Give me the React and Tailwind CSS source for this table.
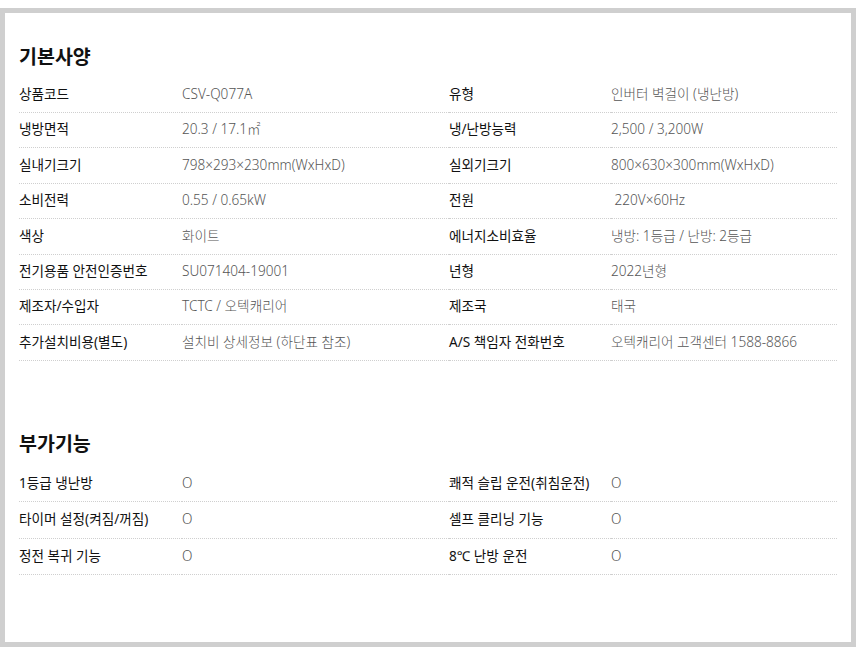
import React from 'react';

const specRows = [
  ['상품코드', 'CSV-Q077A', '유형', '인버터 벽걸이 (냉난방)'],
  ['냉방면적', '20.3 / 17.1㎡', '냉/난방능력', '2,500 / 3,200W'],
  ['실내기크기', '798×293×230mm(WxHxD)', '실외기크기', '800×630×300mm(WxHxD)'],
  ['소비전력', '0.55 / 0.65kW', '전원', '\u00a0220V×60Hz'],
  ['색상', '화이트', '에너지소비효율', '냉방: 1등급 / 난방: 2등급'],
  ['전기용품 안전인증번호', 'SU071404-19001', '년형', '2022년형'],
  ['제조자/수입자', 'TCTC / 오텍캐리어', '제조국', '태국'],
  ['추가설치비용(별도)', '설치비 상세정보 (하단표 참조)', 'A/S 책임자 전화번호', '오텍캐리어 고객센터 1588-8866'],
];

const extraRows = [
  ['1등급 냉난방', 'O', '쾌적 슬립 운전(취침운전)', 'O'],
  ['타이머 설정(켜짐/꺼짐)', 'O', '셀프 클리닝 기능', 'O'],
  ['정전 복귀 기능', 'O', '8℃ 난방 운전', 'O'],
];

function SpecTable({ rows, rowClass }) {
  return (
    <div className="grid grid-cols-[163px_267px_162px_226px]">
      {rows.map((row, i) =>
        row.map((cell, j) => (
          <div
            key={i + '-' + j}
            className={
              'flex items-center border-b border-dotted border-[#cfcfcf] whitespace-nowrap ' +
              rowClass +
              (j % 2 === 0 ? ' text-[#111]' : ' text-[#555] font-light')
            }
          >
            {cell}
          </div>
        ))
      )}
    </div>
  );
}

export default function App() {
  return (
    <div className="bg-white w-[860px] h-[657px] pt-[8px] font-['Noto_Sans','Noto_Sans_CJK_KR',sans-serif]">
      <div className="w-[856px] h-[639px] border-[5px] border-[#cfcfcf] pl-[14px]">
        <section className="pt-[31px]">
          <h2 className="text-[19.5px] leading-[26px] font-bold text-[#111] mb-[7.6px]">기본사양</h2>
          <SpecTable rows={specRows} rowClass="h-[35.4px] text-[13.6px] pb-[1px]" />
        </section>
        <section className="pt-[70px]">
          <h2 className="text-[19.5px] leading-[26px] font-bold text-[#111] mb-[9px]">부가기능</h2>
          <SpecTable rows={extraRows} rowClass="h-[36.5px] text-[13.6px] pb-[1px]" />
        </section>
      </div>
    </div>
  );
}
